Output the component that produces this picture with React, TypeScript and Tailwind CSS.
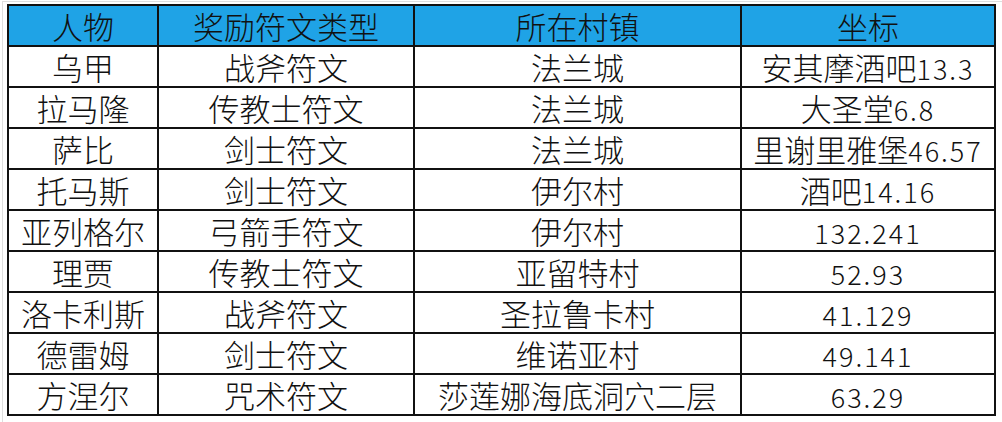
const rows: [string, string, string, string][] = [
  ["乌甲", "战斧符文", "法兰城", "安其摩酒吧13.3"],
  ["拉马隆", "传教士符文", "法兰城", "大圣堂6.8"],
  ["萨比", "剑士符文", "法兰城", "里谢里雅堡46.57"],
  ["托马斯", "剑士符文", "伊尔村", "酒吧14.16"],
  ["亚列格尔", "弓箭手符文", "伊尔村", "132.241"],
  ["理贾", "传教士符文", "亚留特村", "52.93"],
  ["洛卡利斯", "战斧符文", "圣拉鲁卡村", "41.129"],
  ["德雷姆", "剑士符文", "维诺亚村", "49.141"],
  ["方涅尔", "咒术符文", "莎莲娜海底洞穴二层", "63.29"],
];

const headers = ["人物", "奖励符文类型", "所在村镇", "坐标"];

const cell = "border-2 border-[#111] p-0 text-center align-middle leading-none";

// split "安其摩酒吧13.3" into the name and the half-width number part
function Coord({ text }: { text: string }) {
  const m = text.match(/^(\D*)([\d.]+)$/);
  if (!m) return <>{text}</>;
  return (
    <>
      {m[1]}
      <span className="text-[27px] tracking-[2px]">{m[2]}</span>
    </>
  );
}

export default function App() {
  return (
    <div className="h-[422px] w-[1002px] bg-white pl-[2px] pt-[1px] font-['Noto_Sans_CJK_SC',sans-serif] text-[31px] font-light text-[#111]">
      <div className="h-full border-l border-t border-[#dedede] pl-[4px] pt-[2px]">
        <table className="border-collapse table-fixed">
          <colgroup>
            <col className="w-[150px]" />
            <col className="w-[256px]" />
            <col className="w-[327px]" />
            <col className="w-[254px]" />
          </colgroup>
          <thead>
            <tr className="h-[41px] bg-[#1fa3e6]">
              {headers.map((h) => (
                <th key={h} className={`${cell} font-light`}>
                  {h}
                </th>
              ))}
            </tr>
          </thead>
          <tbody>
            {rows.map((r) => (
              <tr key={r[0]} className="h-[41px]">
                {r.map((c, i) => (
                  <td key={i} className={cell}>
                    {i === 3 ? <Coord text={c} /> : c}
                  </td>
                ))}
              </tr>
            ))}
          </tbody>
        </table>
      </div>
    </div>
  );
}
